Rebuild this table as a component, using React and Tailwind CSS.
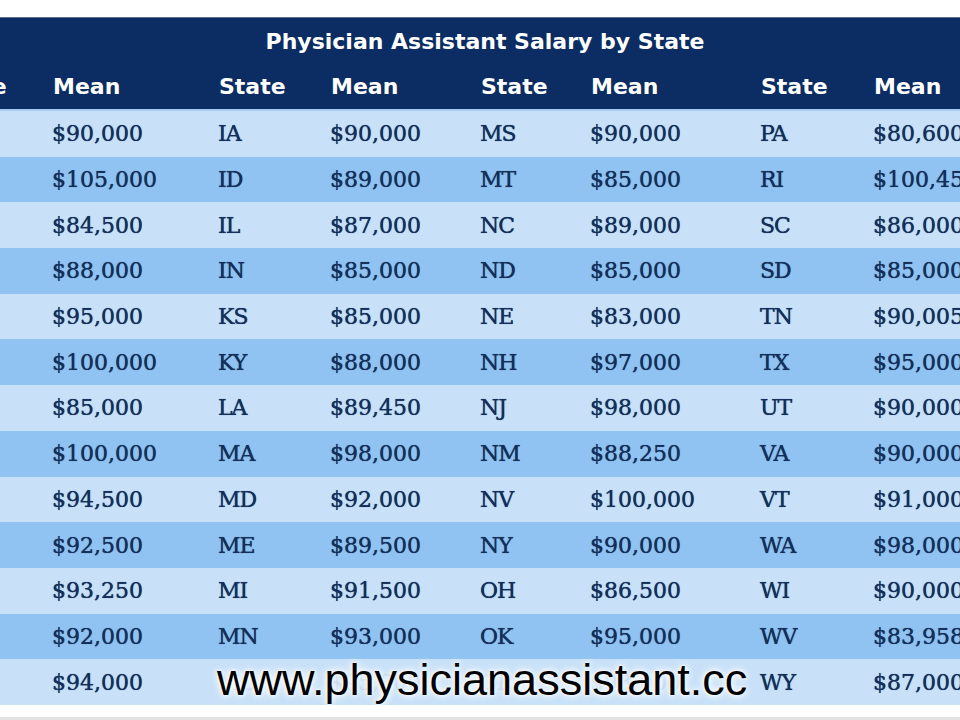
import React from "react";

const rows = [
  ["AK", "$90,000", "IA", "$90,000", "MS", "$90,000", "PA", "$80,600"],
  ["AL", "$105,000", "ID", "$89,000", "MT", "$85,000", "RI", "$100,450"],
  ["AR", "$84,500", "IL", "$87,000", "NC", "$89,000", "SC", "$86,000"],
  ["AZ", "$88,000", "IN", "$85,000", "ND", "$85,000", "SD", "$85,000"],
  ["CA", "$95,000", "KS", "$85,000", "NE", "$83,000", "TN", "$90,005"],
  ["CO", "$100,000", "KY", "$88,000", "NH", "$97,000", "TX", "$95,000"],
  ["CT", "$85,000", "LA", "$89,450", "NJ", "$98,000", "UT", "$90,000"],
  ["DC", "$100,000", "MA", "$98,000", "NM", "$88,250", "VA", "$90,000"],
  ["DE", "$94,500", "MD", "$92,000", "NV", "$100,000", "VT", "$91,000"],
  ["FL", "$92,500", "ME", "$89,500", "NY", "$90,000", "WA", "$98,000"],
  ["GA", "$93,250", "MI", "$91,500", "OH", "$86,500", "WI", "$90,000"],
  ["HI", "$92,000", "MN", "$93,000", "OK", "$95,000", "WV", "$83,958"],
  ["HI", "$94,000", "MO", "$95,000", "OR", "$93,000", "WY", "$87,000"],
];

const cols = "grid grid-cols-[112px_166px_112px_150px_110px_170px_113px_157px]";

export default function App() {
  return (
    <div className="relative w-[960px] h-[720px] overflow-hidden bg-white flex flex-col">
      <div className="h-[17px] shrink-0" />
      <div className="w-[1090px] -ml-[60px] shrink-0">
        <div className="bg-[#0b2d63] border-t border-[#5d6f8c]">
          <div className="h-[46px] flex items-center justify-center text-white font-bold text-[22px] [font-family:'DejaVu_Sans',sans-serif]">
            Physician Assistant Salary by State
          </div>
          <div className={`${cols} h-[45px] items-center text-white font-bold text-[22px] [font-family:'DejaVu_Sans',sans-serif]`}>
            {["State", "Mean", "State", "Mean", "State", "Mean", "State", "Mean"].map((h, i) => (
              <div key={i} className={i === 0 ? "" : "pl-[1px]"}>
                {h}
              </div>
            ))}
          </div>
        </div>
        <div className="h-[2px] bg-[#a9cdf0]" />
        {rows.map((r, i) => {
          const last = i === rows.length - 1;
          return (
            <div
              key={i}
              className={`${cols} h-[45.7px] items-center text-[22px] text-[#142f5a] [font-family:'DejaVu_Serif',serif] [font-variant-numeric:oldstyle-nums] [text-shadow:0_0_0.7px_#142f5a] ${
                i % 2 === 0 ? "bg-[#c8e1f8]" : "bg-[#90c3f1]"
              }`}
            >
              {r.map((c, j) => (
                <div
                  key={j}
                  className={`${j % 2 === 0 ? "tracking-[-1px]" : ""} ${
                    last && j >= 2 && j <= 5 ? "text-[#b3cbe5] [text-shadow:none]" : ""
                  }`}
                >
                  {c}
                </div>
              ))}
            </div>
          );
        })}
      </div>
      <div className="flex-1" />
      <div className="h-[3px] bg-[#e2e2e2] shrink-0" />

      <div className="absolute left-[217px] top-[657px] text-[45px] leading-none text-black [font-family:'Liberation_Sans',Arial,sans-serif] [text-shadow:0_0_3px_#fff,0_0_6px_#fff,0_0_10px_#fff]">
        www.physicianassistant.cc
      </div>
    </div>
  );
}
